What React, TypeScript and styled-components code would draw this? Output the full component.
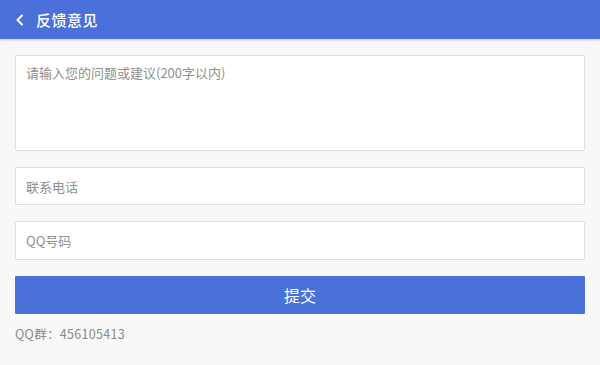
import React from "react";
import styled, { createGlobalStyle } from "styled-components";

const Global = createGlobalStyle`
  html, body { margin: 0; padding: 0; background: #f8f8f8; }
  body { font-family: "Noto Sans CJK SC", "Noto Sans", Roboto, sans-serif; }
`;

const Page = styled.div`
  width: 600px;
  height: 365px;
  background: #f8f8f8;
  display: flex;
  flex-direction: column;
`;

const Header = styled.header`
  height: 39px;
  background: #4a70da;
  display: flex;
  align-items: center;
  padding-left: 14px;
  gap: 10px;
  color: #fff;
  box-shadow: 0 1px 2px rgba(74, 112, 218, 0.35);
`;

const Title = styled.span`
  font-size: 15px;
  font-weight: 500;
  letter-spacing: 0.5px;
`;

const Form = styled.div`
  display: flex;
  flex-direction: column;
  padding: 16px 15px 0 15px;
  gap: 16px;
`;

const Field = styled.div<{ $h: number }>`
  height: ${(p) => p.$h}px;
  box-sizing: border-box;
  background: #fff;
  border: 1.5px solid #dedede;
  border-radius: 2px;
  padding: ${(p) => (p.$h > 60 ? "7px 10px" : "0 10px")};
  display: flex;
  align-items: ${(p) => (p.$h > 60 ? "flex-start" : "center")};
  font-size: 13px;
  color: #8f8f8f;
`;

const Button = styled.div`
  height: 38px;
  background: #4a70da;
  color: #fff;
  font-size: 16px;
  display: flex;
  align-items: center;
  justify-content: center;
  border-radius: 1px;
`;

const Note = styled.div`
  margin-top: -6px;
  font-size: 12.5px;
  color: #8a8a8a;
  letter-spacing: 0.3px;
`;

export default function App() {
  return (
    <Page>
      <Global />
      <Header>
        <svg width="12" height="14" viewBox="0 0 12 14">
          <path d="M8 2.5 L3.5 7 L8 11.5" fill="none" stroke="#fff" strokeWidth="2" strokeLinecap="round" strokeLinejoin="round" />
        </svg>
        <Title>反馈意见</Title>
      </Header>
      <Form>
        <Field $h={96}>请输入您的问题或建议(200字以内)</Field>
        <Field $h={38}>联系电话</Field>
        <Field $h={39}>QQ号码</Field>
        <Button>提交</Button>
        <Note>QQ群：456105413</Note>
      </Form>
    </Page>
  );
}
